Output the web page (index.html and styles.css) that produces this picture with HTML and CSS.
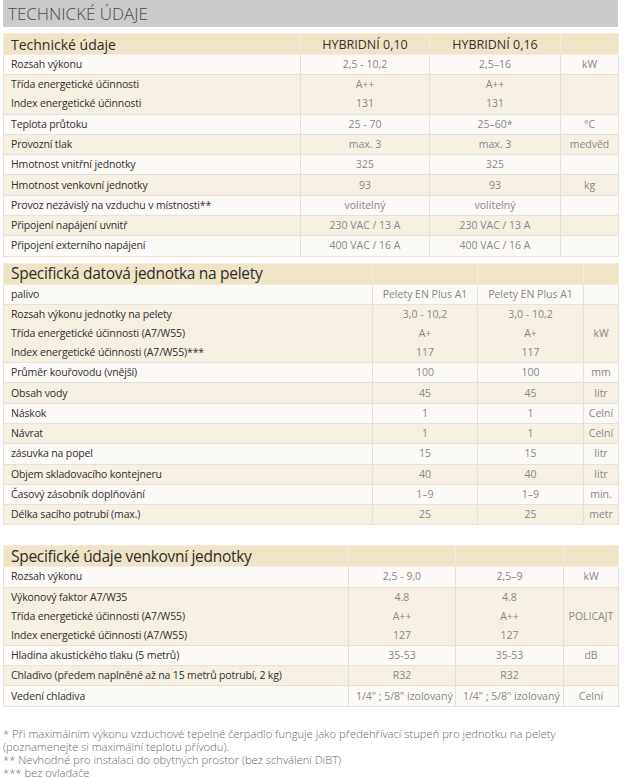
FILE: index.html
```html
<!DOCTYPE html>
<html lang="cs">
<head>
<meta charset="utf-8">
<title>Technické údaje</title>
<link rel="stylesheet" href="styles.css">
</head>
<body>
<div class="page">
  <div class="band">TECHNICKÉ ÚDAJE</div>

  <table class="spec t1">
    <colgroup><col class="c-label"><col class="c-v1"><col class="c-v2"><col class="c-unit"></colgroup>
    <thead>
      <tr class="head"><th class="title">Technické údaje</th><th class="model">HYBRIDNÍ 0,10</th><th class="model">HYBRIDNÍ 0,16</th><th></th></tr>
    </thead>
    <tbody>
      <tr class="lt"><td class="lbl">Rozsah výkonu</td><td>2,5 - 10,2</td><td>2,5–16</td><td class="unit">kW</td></tr>
      <tr class="dk"><td class="lbl">Třída energetické účinnosti<br>Index energetické účinnosti</td><td>A++<br>131</td><td>A++<br>131</td><td class="unit"></td></tr>
      <tr class="lt"><td class="lbl">Teplota průtoku</td><td>25 - 70</td><td>25–60*</td><td class="unit">°C</td></tr>
      <tr class="dk"><td class="lbl">Provozní tlak</td><td>max. 3</td><td>max. 3</td><td class="unit">medvěd</td></tr>
      <tr class="lt"><td class="lbl">Hmotnost vnitřní jednotky</td><td>325</td><td>325</td><td class="unit"></td></tr>
      <tr class="dk"><td class="lbl">Hmotnost venkovní jednotky</td><td>93</td><td>93</td><td class="unit">kg</td></tr>
      <tr class="lt"><td class="lbl">Provoz nezávislý na vzduchu v místnosti**</td><td>volitelný</td><td>volitelný</td><td class="unit"></td></tr>
      <tr class="dk"><td class="lbl">Připojení napájení uvnitř</td><td>230 VAC / 13 A</td><td>230 VAC / 13 A</td><td class="unit"></td></tr>
      <tr class="lt"><td class="lbl">Připojení externího napájení</td><td>400 VAC / 16 A</td><td>400 VAC / 16 A</td><td class="unit"></td></tr>
    </tbody>
  </table>

  <table class="spec t2">
    <colgroup><col class="c-label"><col class="c-v1"><col class="c-v2"><col class="c-unit"></colgroup>
    <thead>
      <tr class="head"><th class="title big">Specifická datová jednotka na pelety</th><th></th><th></th><th></th></tr>
    </thead>
    <tbody>
      <tr class="lt"><td class="lbl">palivo</td><td>Pelety EN Plus A1</td><td>Pelety EN Plus A1</td><td class="unit"></td></tr>
      <tr class="dk"><td class="lbl">Rozsah výkonu jednotky na pelety<br>Třída energetické účinnosti (A7/W55)<br>Index energetické účinnosti (A7/W55)***</td><td>3,0 - 10,2<br>A+<br>117</td><td>3,0 - 10,2<br>A+<br>117</td><td class="unit">kW</td></tr>
      <tr class="lt"><td class="lbl">Průměr kouřovodu (vnější)</td><td>100</td><td>100</td><td class="unit">mm</td></tr>
      <tr class="dk"><td class="lbl">Obsah vody</td><td>45</td><td>45</td><td class="unit">litr</td></tr>
      <tr class="lt"><td class="lbl">Náskok</td><td>1</td><td>1</td><td class="unit">Celní</td></tr>
      <tr class="dk"><td class="lbl">Návrat</td><td>1</td><td>1</td><td class="unit">Celní</td></tr>
      <tr class="lt"><td class="lbl">zásuvka na popel</td><td>15</td><td>15</td><td class="unit">litr</td></tr>
      <tr class="dk"><td class="lbl">Objem skladovacího kontejneru</td><td>40</td><td>40</td><td class="unit">litr</td></tr>
      <tr class="lt"><td class="lbl">Časový zásobník doplňování</td><td>1–9</td><td>1–9</td><td class="unit">min.</td></tr>
      <tr class="dk"><td class="lbl">Délka sacího potrubí (max.)</td><td>25</td><td>25</td><td class="unit">metr</td></tr>
    </tbody>
  </table>

  <table class="spec t3">
    <colgroup><col class="c-label"><col class="c-v1"><col class="c-v2"><col class="c-unit"></colgroup>
    <thead>
      <tr class="head"><th class="title big">Specifické údaje venkovní jednotky</th><th></th><th></th><th></th></tr>
    </thead>
    <tbody>
      <tr class="lt"><td class="lbl">Rozsah výkonu</td><td>2,5 - 9,0</td><td>2,5–9</td><td class="unit">kW</td></tr>
      <tr class="dk"><td class="lbl">Výkonový faktor A7/W35<br>Třída energetické účinnosti (A7/W55)<br>Index energetické účinnosti (A7/W55)</td><td>4.8<br>A++<br>127</td><td>4.8<br>A++<br>127</td><td class="unit">POLICAJT</td></tr>
      <tr class="lt"><td class="lbl">Hladina akustického tlaku (5 metrů)</td><td>35-53</td><td>35-53</td><td class="unit">dB</td></tr>
      <tr class="dk"><td class="lbl">Chladivo (předem naplněné až na 15 metrů potrubí, 2 kg)</td><td>R32</td><td>R32</td><td class="unit"></td></tr>
      <tr class="lt"><td class="lbl">Vedení chladiva</td><td>1/4" ; 5/8" izolovaný</td><td>1/4" ; 5/8" izolovaný</td><td class="unit">Celní</td></tr>
    </tbody>
  </table>

  <div class="notes">
    <p>* Při maximálním výkonu vzduchové tepelné čerpadlo funguje jako předehřívací stupeň pro jednotku na pelety (poznamenejte si maximální teplotu přívodu).</p>
    <p>** Nevhodné pro instalaci do obytných prostor (bez schválení DiBT)</p>
    <p>*** bez ovladače</p>
  </div>
</div>
</body>
</html>
```

FILE: styles.css
```css
html, body {
  margin: 0;
  padding: 0;
  background: #ffffff;
}

body {
  font-family: "Open Sans", "Liberation Sans", sans-serif;
  color: #333;
}

.page {
  width: 615px;
  padding-left: 3px;
}

.band {
  height: 27px;
  line-height: 28px;
  background: #c9cbcc;
  padding-left: 5px;
  font-size: 17px;
  font-weight: 300;
  color: #4a4a4a;
}

.spec {
  width: 615px;
  border-collapse: collapse;
  table-layout: fixed;
  font-size: 10.5px;
}

.t1 { margin-top: 6px; }
.t2 { margin-top: 6px; }
.t3 { margin-top: 20px; }

.t1 .c-label { width: 297px; }
.t1 .c-v1 { width: 129px; }
.t1 .c-v2 { width: 131px; }
.t1 .c-unit { width: 58px; }

.t2 .c-label { width: 369px; }
.t2 .c-v1 { width: 105px; }
.t2 .c-v2 { width: 106px; }
.t2 .c-unit { width: 35px; }

.t3 .c-label { width: 345px; }
.t3 .c-v1 { width: 107px; }
.t3 .c-v2 { width: 108px; }
.t3 .c-unit { width: 55px; }

.spec th,
.spec td {
  border: 1px solid #e6e1d7;
  padding: 0.15px 7px;
  line-height: 19px;
  text-align: center;
  color: #878787;
  font-weight: 400;
  white-space: nowrap;
  overflow: hidden;
}

.head th {
  background: #efe4c5;
  border-color: #f4ecd8;
  height: 20px;
  padding: 0 7px;
  color: #333;
}

.head th.title {
  text-align: left;
  font-size: 14px;
  font-weight: 400;
  color: #2d2d2d;
}

.head th.title.big {
  font-size: 15.5px;
  letter-spacing: -0.3px;
}

.head th.model {
  font-size: 12.5px;
  font-weight: 500;
  color: #333;
}

.lt td { background: #fcfaf6; }
.dk td { background: #f6f0e3; }

.spec td.lbl {
  text-align: left;
  color: #2f2f2f;
  font-weight: 500;
  letter-spacing: -0.15px;
}

.spec td.unit {
  padding: 0.15px 2px;
}

.notes {
  margin-top: 20px;
  font-size: 11.2px;
  font-weight: 300;
  color: #6a6a6a;
  line-height: 13px;
}

.notes p {
  margin: 0;
}
```
